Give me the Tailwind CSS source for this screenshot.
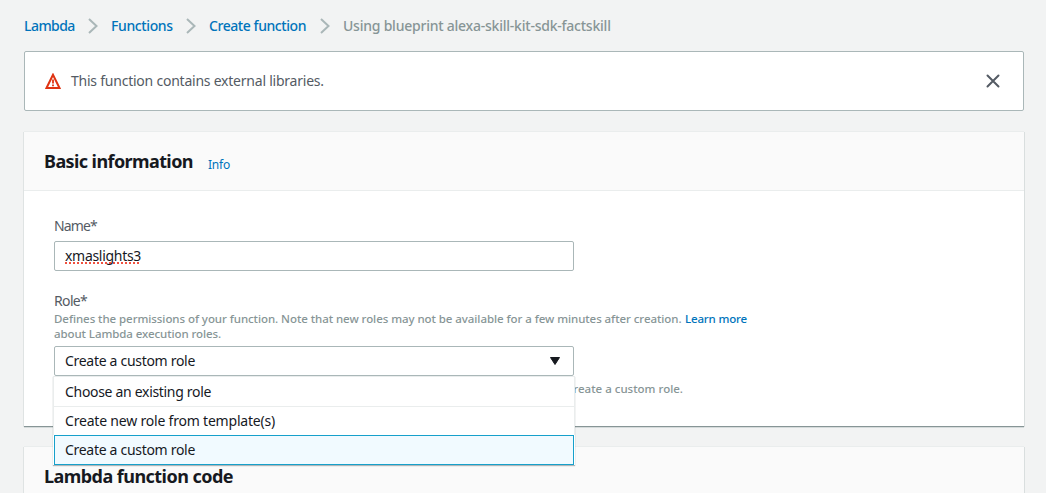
<!DOCTYPE html>
<html lang="en">
<head>
<meta charset="utf-8">
<title>Create function</title>
<script src="https://cdn.jsdelivr.net/npm/@tailwindcss/browser@4"></script>
</head>
<body class="h-[493px] overflow-hidden bg-[#f2f3f3] px-6 font-['Noto_Sans',sans-serif] text-[14px] leading-5 text-[#16191f]">
  <nav class="flex h-[51px] items-center pt-px font-medium whitespace-nowrap text-[#0073bb]">
    <a class="w-[64px] tracking-[-0.55px]">Lambda</a>
    <svg class="mr-[13px] h-4 w-[10px]" viewBox="0 0 10 16" fill="none" stroke="#aab7b8" stroke-width="2"><path d="M1 1l7.5 7L1 15"/></svg>
    <a class="w-[75px] tracking-[-0.38px]">Functions</a>
    <svg class="mr-[13px] h-4 w-[10px]" viewBox="0 0 10 16" fill="none" stroke="#aab7b8" stroke-width="2"><path d="M1 1l7.5 7L1 15"/></svg>
    <a class="w-[111px] tracking-[-0.43px]">Create function</a>
    <svg class="mr-[13px] h-4 w-[10px]" viewBox="0 0 10 16" fill="none" stroke="#aab7b8" stroke-width="2"><path d="M1 1l7.5 7L1 15"/></svg>
    <span class="tracking-[-0.23px] text-[#879596]">Using blueprint alexa-skill-kit-sdk-factskill</span>
  </nav>

  <div class="flex h-[60px] w-[1000px] items-center rounded-[2px] border border-[#aab7b8] bg-white pr-[23px] pl-5">
    <svg class="mr-[10px] h-4 w-4" viewBox="0 0 16 16" fill="none" stroke="#df3312" stroke-width="2"><path d="M8 1.8L1.5 15h13z"/><path d="M8 6.5v4M8 11.5v1.7" stroke-width="1.8"/></svg>
    <span class="grow tracking-[-0.23px] text-[#545b64]">This function contains external libraries.</span>
    <svg class="h-[14px] w-[14px]" viewBox="0 0 14 14" fill="none" stroke="#545b64" stroke-width="2" stroke-linecap="round"><path d="M1.5 1.5l11 11M12.5 1.5l-11 11"/></svg>
  </div>

  <section class="mt-5 h-[295px] w-[1000px] border-t border-[#eaeded] bg-white shadow-[0_1px_0_0_#879596,0_2px_0_0_#d5dbdb,1px_1px_0_0_#d9dede,-1px_1px_0_0_#dfe3e3]">
    <header class="flex h-[59px] items-baseline border-b border-[#eaeded] bg-[#fafafa] px-5 pt-[17px]">
      <h2 class="w-[164px] text-[18px] leading-6 font-bold tracking-[-0.59px]">Basic information</h2>
      <a class="translate-y-px text-[12px] tracking-[-0.2px] text-[#0073bb]">Info</a>
    </header>
    <div class="px-[30px] pt-[25px]">
      <label class="block tracking-[-0.9px] text-[#545b64]">Name*</label>
      <div class="mt-[5px] flex h-[30px] w-[520px] items-center rounded-[2px] border border-[#aab7b8] px-[10px]">
        <span class="tracking-[-0.3px] underline decoration-[#f0503f] decoration-dotted decoration-2 underline-offset-[1px] [text-decoration-skip-ink:none]">xmaslights3</span>
      </div>
      <label class="mt-5 block tracking-[-0.65px] text-[#545b64]">Role*</label>
      <p class="w-[710px] text-[11.5px] leading-[15px] font-medium text-[#879596]"><span class="whitespace-nowrap"><span class="inline-block w-[631px] tracking-[-0.065px]">Defines the permissions of your function. Note that new roles may not be available for a few minutes after creation.</span><a class="tracking-[-0.15px] text-[#0073bb]">Learn more</a></span><br><span class="tracking-[-0.08px]">about Lambda execution roles.</span></p>
      <div class="relative mt-[5px] w-[520px]">
        <div class="flex h-[30px] items-center justify-between rounded-[2px] border border-[#aab7b8] pr-[13px] pl-[10px]">
          <span class="tracking-[-0.3px]">Create a custom role</span>
          <svg class="h-2 w-[10px]" viewBox="0 0 10 8" fill="#16191f" stroke="#16191f" stroke-linejoin="round"><path d="M.5.5h9L5 7.5z"/></svg>
        </div>
        <ul class="absolute top-[30px] -left-px z-10 w-[522px] bg-white shadow-[0_1px_1px_0_rgba(0,28,36,0.3)]">
          <li class="flex h-[30px] items-center border border-b-0 border-[#eaeded] pl-[11px] tracking-[-0.31px]">Choose an existing role</li>
          <li class="flex h-[29px] items-center border-x border-t border-[#eaeded] pl-[11px] tracking-[-0.2px]">Create new role from template(s)</li>
          <li class="mx-px flex h-[30px] items-center border border-[#16a0cb] bg-[#f1faff] pl-[10px] tracking-[-0.3px]">Create a custom role</li>
        </ul>
      </div>
      <p class="mt-[5px] w-[629px] text-right text-[11.5px] leading-[15px] font-medium text-[#879596]">create a custom role.</p>
    </div>
  </section>

  <section class="mt-5 h-[60px] w-[1000px] border-t border-[#eaeded] bg-[#fafafa] px-5 pt-[17px] shadow-[1px_1px_0_0_#d9dede,-1px_1px_0_0_#dfe3e3]">
    <h2 class="text-[18px] leading-6 font-bold tracking-[-0.54px]">Lambda function code</h2>
  </section>
</body>
</html>
